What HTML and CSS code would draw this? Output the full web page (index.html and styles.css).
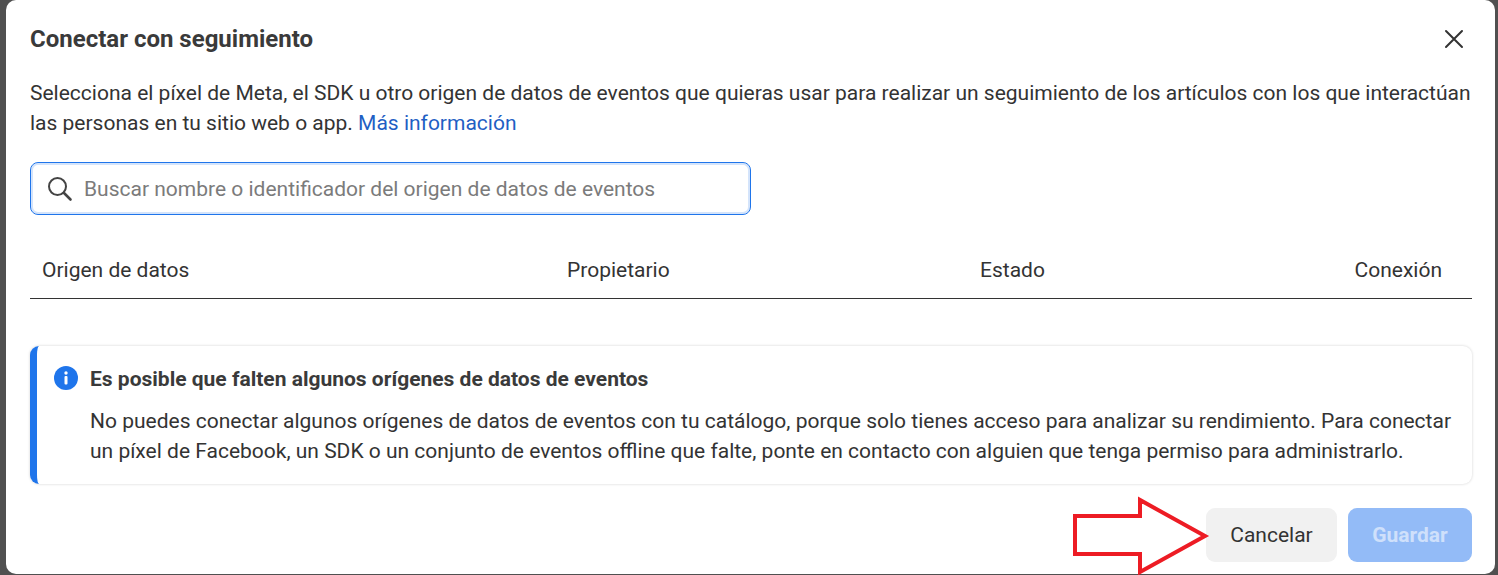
FILE: index.html
```html
<!DOCTYPE html>
<html lang="es">
<head>
<meta charset="utf-8">
<title>Conectar con seguimiento</title>
<link rel="stylesheet" href="styles.css">
</head>
<body>
<div class="dialog">
  <header class="head">
    <h1 class="title">Conectar con seguimiento</h1>
    <svg class="close" width="20" height="20" viewBox="0 0 20 20"><path d="M2 2 18 18M18 2 2 18" stroke="#333" stroke-width="2" stroke-linecap="round" fill="none"/></svg>
  </header>
  <p class="intro">Selecciona el píxel de Meta, el SDK u otro origen de datos de eventos que quieras usar para realizar un seguimiento de los artículos con los que interactúan las personas en tu sitio web o app. <a class="link">Más información</a></p>
  <div class="search">
    <svg class="search-icon" width="26" height="26" viewBox="0 0 26 26"><circle cx="10.5" cy="10.500" r="8.500" stroke="#444" stroke-width="2" fill="none"/><path d="M17 17 23.500 23.500" stroke="#444" stroke-width="2.600" stroke-linecap="round"/></svg>
    <span class="placeholder">Buscar nombre o identificador del origen de datos de eventos</span>
  </div>
  <div class="thead">
    <span class="col col-a">Origen de datos</span>
    <span class="col col-b">Propietario</span>
    <span class="col col-c">Estado</span>
    <span class="col col-d">Conexión</span>
  </div>
  <div class="notice">
    <svg class="info" width="24" height="24" viewBox="0 0 24 24"><circle cx="12" cy="12" r="12" fill="#1f75eb"/><circle cx="12" cy="7" r="1.700" fill="#fff"/><rect x="10.500" y="10" width="3" height="8.500" rx="1" fill="#fff"/></svg>
    <div class="notice-body">
      <h2 class="notice-title">Es posible que falten algunos orígenes de datos de eventos</h2>
      <p class="notice-text">No puedes conectar algunos orígenes de datos de eventos con tu catálogo, porque solo tienes acceso para analizar su rendimiento. Para conectar un píxel de Facebook, un SDK o un conjunto de eventos offline que falte, ponte en contacto con alguien que tenga permiso para administrarlo.</p>
    </div>
  </div>
  <footer class="foot">
    <button class="btn btn-cancel">Cancelar</button>
    <button class="btn btn-save">Guardar</button>
  </footer>
  <svg class="arrow" width="140" height="80" viewBox="0 0 140 80"><path d="M3 20H68V4L133 40 68 76V58H3Z" fill="none" stroke="#ed1c24" stroke-width="4"/></svg>
</div>
</body>
</html>
```
FILE: styles.css
```css
* { box-sizing: border-box; }
html, body { margin: 0; height: 575px; overflow: hidden; }
body { background: #505050; font-family: Roboto, "Liberation Sans", sans-serif; color: #333; padding: 0 3px 1px 6px; }
.dialog { position: relative; height: 574px; background: #fff; border-radius: 10px; padding: 0 23px 0 24px; }
.head { display: flex; justify-content: space-between; align-items: center; height: 78px; padding-right: 8px; }
.title { margin: 0; font-size: 24px; font-weight: 700; color: #3a3a3a; }
.close { display: block; }
.intro { margin: 0; font-size: 21px; line-height: 30px; color: #333; }
.link { color: #1f5fc4; }
.search { display: flex; align-items: center; gap: 10px; width: 721px; height: 53px; margin-top: 24px; padding-left: 16px; border: 1.500px solid #1f75eb; border-radius: 8px; box-shadow: inset 0 0 0 2px #d4e4fb; }
.placeholder { font-size: 21px; color: #7b7b7b; margin-left: 1px; }
.thead { display: grid; grid-template-columns: 525px 413px 1fr auto; height: 84px; padding: 26px 30px 0 12px; align-items: center; border-bottom: 1px solid #333; font-size: 21px; }
.notice { display: flex; gap: 12px; height: 138px; margin-top: 47px; padding: 20px 16px 0 17px; border-left: 7px solid #1f75eb; border-radius: 9px; box-shadow: 0 0 3px rgba(0,0,0,.18); }
.info { flex: none; }
.notice-title { margin: 0; font-size: 21px; line-height: 26px; font-weight: 700; color: #3a3a3a; }
.notice-text { margin: 14px 0 0; font-size: 21px; line-height: 30px; }
.foot { display: flex; justify-content: flex-end; gap: 11px; margin-top: 24px; }
.btn { height: 54px; border: 0; border-radius: 9px; font: 21px Roboto, "Liberation Sans", sans-serif; }
.btn-cancel { width: 131px; background: #f1f1f1; color: #333; }
.btn-save { width: 124px; background: #93bbf7; color: #cfe0fb; font-weight: 700; }
.arrow { position: absolute; left: 1066px; top: 496px; }
```
